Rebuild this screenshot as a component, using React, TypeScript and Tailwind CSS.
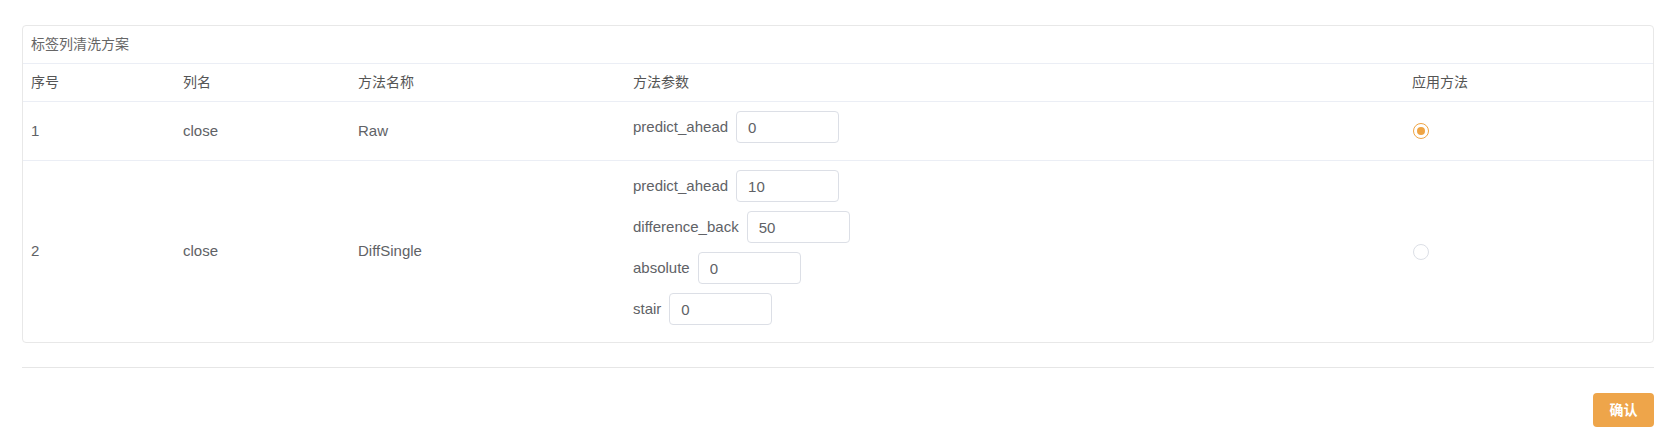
import React from "react";

const font = { fontFamily: '"Liberation Sans", "Noto Sans CJK SC", sans-serif' };

type Param = { name: string; value: string };
type Row = { id: number; col: string; method: string; params: Param[]; checked: boolean };

const rows: Row[] = [
  { id: 1, col: "close", method: "Raw", params: [{ name: "predict_ahead", value: "0" }], checked: true },
  {
    id: 2,
    col: "close",
    method: "DiffSingle",
    params: [
      { name: "predict_ahead", value: "10" },
      { name: "difference_back", value: "50" },
      { name: "absolute", value: "0" },
      { name: "stair", value: "0" },
    ],
    checked: false,
  },
];

function Radio({ checked }: { checked: boolean }) {
  return checked ? (
    <span className="flex h-[16px] w-[16px] items-center justify-center rounded-full border border-[#efa443] bg-white">
      <span className="h-[8px] w-[8px] rounded-full bg-[#efa443]" />
    </span>
  ) : (
    <span className="block h-[16px] w-[16px] rounded-full border border-[#dcdfe6] bg-white" />
  );
}

export default function App() {
  const grid = "grid grid-cols-[152px_175px_275px_779px_1fr]";
  return (
    <div className="w-[1666px] h-[440px] bg-white pl-[22px] pr-[12px] pt-[25px]" style={font}>
      <div className="rounded-[4px] border border-[#e8e8e8]">
        <div className="h-[37px] flex items-center px-[8px] text-[14px] text-[#666]">标签列清洗方案</div>
        <div className={`${grid} h-[38px] items-center border-t border-[#ebeef5] text-[14px] text-[#555]`}>
          <div className="px-[8px]">序号</div>
          <div className="px-[8px]">列名</div>
          <div className="px-[8px]">方法名称</div>
          <div className="px-[8px]">方法参数</div>
          <div className="px-[8px]">应用方法</div>
        </div>
        {rows.map((r) => (
          <div key={r.id} className={`${grid} items-center border-t border-[#ebeef5] text-[15px] text-[#606266]`}>
            <div className="px-[8px]">{r.id}</div>
            <div className="px-[8px]">{r.col}</div>
            <div className="px-[8px]">{r.method}</div>
            <div className="px-[8px] pt-[9px] pb-[8px]">
              {r.params.map((p) => (
                <div key={p.name} className="mb-[9px] flex items-center gap-[8px]">
                  <span>{p.name}</span>
                  <input
                    readOnly
                    value={p.value}
                    className="h-[32px] w-[103px] rounded-[4px] border border-[#dcdfe6] px-[11px] text-[15px] text-[#606266] outline-none"
                    style={font}
                  />
                </div>
              ))}
            </div>
            <div className="px-[9px]">
              <Radio checked={r.checked} />
            </div>
          </div>
        ))}
      </div>
      <div className="mt-[24px] border-t border-[#e6e6e6]" />
      <div className="mt-[25px] flex justify-end">
        <button className="h-[34px] w-[61px] rounded-[4px] bg-[#eea54a] text-[14px] font-bold text-white" style={font}>
          确认
        </button>
      </div>
    </div>
  );
}
